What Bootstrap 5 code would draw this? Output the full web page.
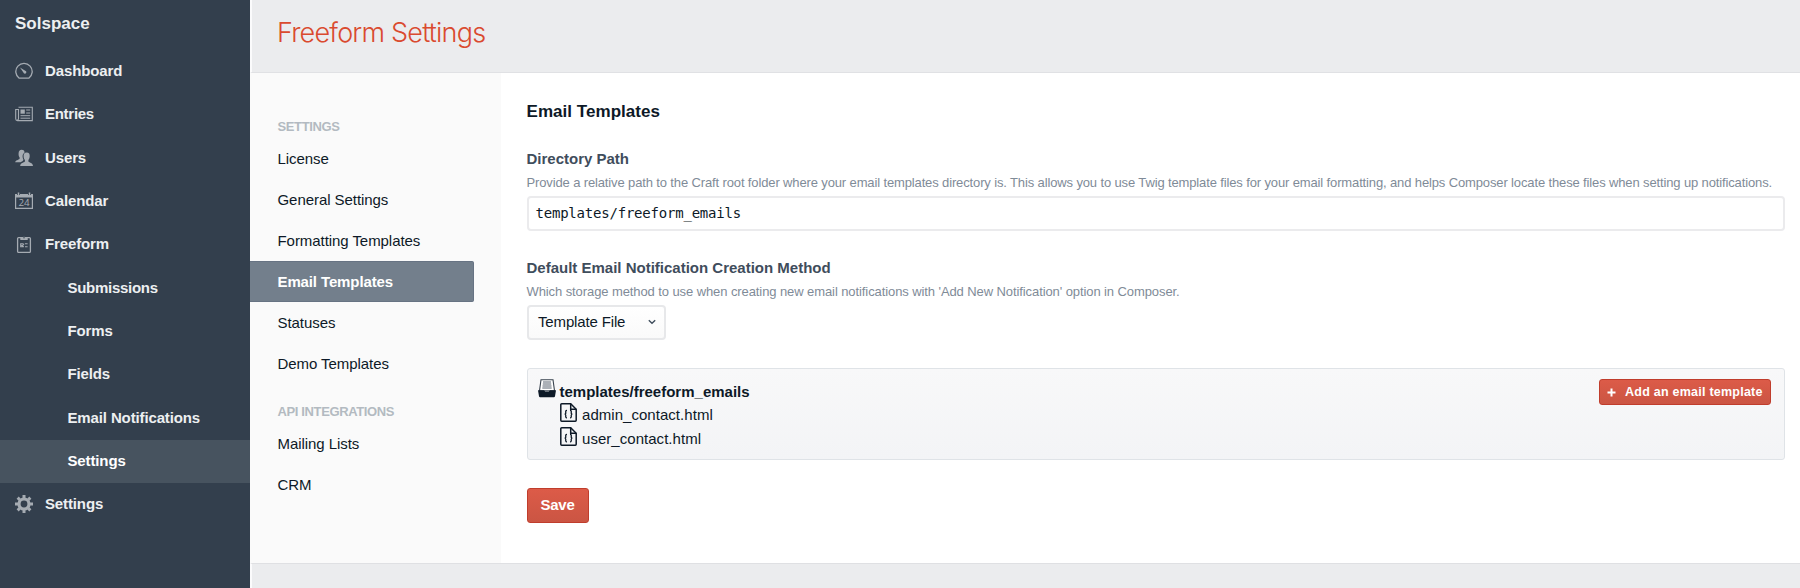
<!DOCTYPE html>
<html lang="en">
<head>
<meta charset="utf-8">
<title>Freeform Settings</title>
<link href="https://cdn.jsdelivr.net/npm/bootstrap@5.3.0/dist/css/bootstrap.min.css" rel="stylesheet">
<style>
body{font:15px/20px "Liberation Sans",Arial,sans-serif;color:#0d1927;background:#ebecee;height:588px;overflow:hidden}
.side{width:250px;background:#333f4d;color:#edeff1;font-weight:700}
.brand{height:50px;padding:14px 0 0 15px;font-size:17px}
.side .nav-link{height:43.33px;padding:0 0 1px 15px;color:#edeff1;letter-spacing:-.13px;display:flex;align-items:center}
.side .nav-link svg{width:18px;height:18px;margin-right:12px;color:#a5abb2;flex:none}
.side .nav-link.sub{padding-left:67.5px}
.side .nav-link.tight{letter-spacing:-.28px}
.side .nav-link.active{background:#47535f;color:#fff}
.page-head{height:73px;border-left:2px solid #fbfbfc;border-bottom:1px solid #e0e1e4;padding:14px 0 0 25px}
.page-head h1{font:300 27px/38px Inter,"Liberation Sans",sans-serif;letter-spacing:-.8px;color:#da4a2f;margin:0}
.panel{height:490px}
.settings{width:251px;background:#fafafa;padding:42px 0 0}
.settings h2{font-size:13px;font-weight:700;line-height:24px;height:23px;letter-spacing:-.37px;color:#b3bac1;margin:0;padding-left:27.5px}
.settings .nav+h2{margin-top:15px}
.settings .nav-link{height:41.1px;padding:0 0 0 27.5px;color:#0d1927;letter-spacing:-.06px;line-height:41px}
.settings .nav-link.active{width:224px;background:#737f8c;border:1px solid #677383;border-left:0;border-radius:0 2px 2px 0;color:#fff;font-weight:700;letter-spacing:-.12px;line-height:40px}
.main-col{background:#fff;padding:28px 15px 0 25.5px}
.main-col h2{font-size:17px;font-weight:700;line-height:22px;margin:0 0 26px;letter-spacing:.04px}
.main-col .form-label{display:block;font-weight:700;color:#3f4d5c;line-height:20px;margin:0 0 5px}
.main-col .form-label.method{padding-top:27px}
.hint{font-size:13px;line-height:18px;color:#7f8b98;letter-spacing:-.132px;margin:0 0 4px;white-space:nowrap}
.hint.short{letter-spacing:-.09px}
.main-col .form-control{height:35px;border:2px solid #ebebed;border-radius:4px;padding:2px 8px 0 7px;font:14px/26px "DejaVu Sans Mono",monospace;letter-spacing:-.21px;color:#0d1927}
.picker{width:139px;height:35px;border:2px solid #e7e8ea;border-radius:4px;background:linear-gradient(#fff,#fafafa);padding:0 8px 2px 9.500px;letter-spacing:-.15px}
.filebox{height:92px;margin-top:28px;border:1px solid #dfe3e7;border-radius:3px;background:linear-gradient(#f8f8f9,#f3f4f6);padding:10px 13px 0 10px}
.filebox .f-row{height:24px;white-space:nowrap}
.filebox .f-dir{padding-top:3px}
.filebox .f-item{padding-left:22.5px}
.filebox .f-item span{margin-left:5px;padding-top:1.500px;letter-spacing:.04px}
.btn-submit{background:linear-gradient(#dc5b48,#cb5543);border:1px solid #c03d2c;color:#fff;font-weight:700;padding:0;border-radius:3px}
.btn-submit.save{width:62px;height:35px;margin-top:28px;font-size:15px;letter-spacing:-.26px}
.btn-submit.add{width:172px;height:26px;font-size:12.5px;line-height:24px;letter-spacing:.24px;padding-left:7px}
.btn-submit.add svg{margin-right:9px}
.page-foot{height:25px;border-left:2px solid #fbfbfc;border-top:1px solid #dfe0e3}
</style>
</head>
<body class="d-flex">
<aside class="side flex-shrink-0">
  <div class="brand">Solspace</div>
  <nav class="nav flex-column">
    <a class="nav-link"><svg viewBox="0 0 18 18" fill="none" stroke="currentColor" stroke-width="1.3"><path d="M4.200 16.200a8.200 8.200 0 1 1 9.600 0z" stroke-linejoin="round"/><path d="M5 5.400l5.200 3.300a1.500 1.500 0 1 1-1.800 1.800z" fill="currentColor" stroke="none"/></svg>Dashboard</a>
    <a class="nav-link tight"><svg viewBox="0 0 18 18" fill="none" stroke="currentColor"><path d="M3.500 2.300h13.800v13.300H2.500a1.800 1.800 0 0 1-1.800-1.800V4.500h2.800v9.200a1.200 1.200 0 0 1-1.200 1.200" stroke-width="1.100"/><path d="M5.500 4.500h4.300v4.200H5.500z" fill="currentColor" stroke="none"/><path d="M11.200 5h4M11.200 8h4M5.500 10.700h9.700M5.500 13.200h9.700" stroke-width="1"/></svg>Entries</a>
    <a class="nav-link"><svg viewBox="0 0 18 18" fill="currentColor"><path d="M6.600.8c2.200 0 3 1.300 2.900 2.900-1.500.8-2.100 2.300-1.900 4.400.1 1.200.5 2 .9 2.600-.2 1.300-1.700 1.600-3 2.500H.2c.3-2.200 3.200-2 4.400-3.500V8.400C3.600 7.300 3.500 5.800 3.600 4.300 3.700 2 4.700.8 6.600.8z"/><path d="M11.700 3.500c2.300 0 3.200 1.500 3 3.800-.1 1.700-.6 3-1.300 3.800v1.500c1.200 1.200 4.400 1.400 4.600 4.400H5.200c.2-3 3.400-3.200 4.700-4.400v-1.500c-.8-.8-1.200-2.200-1.300-3.800-.1-2.300.8-3.800 3.100-3.800z"/></svg>Users</a>
    <a class="nav-link"><svg viewBox="0 0 18 18"><path d="M.6 2.600h16.800v13.800H.6z" fill="none" stroke="currentColor" stroke-width="1.200"/><path d="M.6 2h16.800v3.500H.6z" fill="currentColor"/><path d="M3.500.3v2.700M14.500.3v2.700" stroke="#333f4d" stroke-width="3"/><path d="M3.500.4v2.600M14.500.4v2.600" stroke="currentColor" stroke-width="1.500"/><text x="9" y="14.400" text-anchor="middle" font-size="9.800" font-weight="400" fill="currentColor" letter-spacing="0" font-family="Open Sans">24</text></svg>Calendar</a>
    <a class="nav-link"><svg viewBox="0 0 18 18" fill="none" stroke="currentColor"><rect x="2.600" y="2.600" width="12.800" height="14.800" rx="1" stroke-width="1.300"/><path d="M5.300 5V3h1.900a1.900 1.900 0 0 1 3.600 0h1.900v2z" fill="currentColor" stroke="none"/><circle cx="9" cy="2.800" r=".7" fill="#333f4d" stroke="none"/><path d="M8 8.800H5.700v3h2.600V11M6.500 10l.8 1 1.700-2.300M10 8.800h2.600M10 11.800h2.600" stroke-width="1.100"/></svg>Freeform</a>
    <a class="nav-link sub tight">Submissions</a>
    <a class="nav-link sub">Forms</a>
    <a class="nav-link sub">Fields</a>
    <a class="nav-link sub">Email Notifications</a>
    <a class="nav-link sub active">Settings</a>
    <a class="nav-link"><svg viewBox="0 0 18 18" fill="none" stroke="currentColor"><circle cx="9" cy="9" r="5" stroke-width="3.200"/><path d="M9 0v3M9 15v3M0 9h3M15 9h3M2.640 2.640l2.100 2.100M13.260 13.260l2.100 2.100M2.640 15.360l2.100-2.100M13.260 4.740l2.100-2.100" stroke-width="3"/></svg>Settings</a>
  </nav>
</aside>
<div class="flex-grow-1">
  <header class="page-head"><h1>Freeform Settings</h1></header>
  <div class="panel d-flex">
    <nav class="settings flex-shrink-0">
      <h2>SETTINGS</h2>
      <div class="nav flex-column">
        <a class="nav-link">License</a>
        <a class="nav-link">General Settings</a>
        <a class="nav-link">Formatting Templates</a>
        <a class="nav-link active">Email Templates</a>
        <a class="nav-link">Statuses</a>
        <a class="nav-link">Demo Templates</a>
      </div>
      <h2>API INTEGRATIONS</h2>
      <div class="nav flex-column">
        <a class="nav-link">Mailing Lists</a>
        <a class="nav-link">CRM</a>
      </div>
    </nav>
    <main class="main-col flex-grow-1">
      <h2>Email Templates</h2>
      <label class="form-label">Directory Path</label>
      <p class="hint">Provide a relative path to the Craft root folder where your email templates directory is. This allows you to use Twig template files for your email formatting, and helps Composer locate these files when setting up notifications.</p>
      <div class="form-control" contenteditable="true" role="textbox">templates/freeform_emails</div>
      <label class="form-label method">Default Email Notification Creation Method</label>
      <p class="hint short">Which storage method to use when creating new email notifications with 'Add New Notification' option in Composer.</p>
      <div class="picker d-flex align-items-center justify-content-between">Template File<svg width="8" height="6" viewBox="0 0 8 6" fill="none" stroke="#3f4d5c" stroke-width="1.400"><path d="M.8 1.200L4 4.200l3.200-3"/></svg></div>
      <div class="filebox d-flex justify-content-between">
        <div>
          <div class="f-row d-flex fw-bold"><svg class="me-1" width="18" height="19" viewBox="0 0 18 19" fill="none"><path d="M3 .7h12l1.500 11h-15z" fill="#fff" stroke="#37414d" stroke-width="1.100"/><path d="M5 3h8M4.800 5h8.400M4.500 7h9M4.300 9h9.400" stroke="#596370" stroke-width="1"/><path d="M0 11.200h6l1.200 1.400h3.600l1.200-1.400h6l-1 6a1.200 1.200 0 0 1-1.200 1H2.200a1.200 1.200 0 0 1-1.200-1z" fill="#0d1927"/></svg><span class="f-dir">templates/freeform_emails</span></div>
          <div class="f-row d-flex f-item"><svg width="17" height="19" viewBox="0 0 17 19" fill="none" stroke="#0d1927" stroke-width="1.500"><path d="M1.700.8h9l5.500 5.400v11.100a.9.900 0 0 1-.9.900H1.700a.9.900 0 0 1-.9-.9V1.700a.9.900 0 0 1 .9-.9z"/><path d="M10.700.8v5.400h5.500"/><path d="M7 7.300c-2 0-1 2.500-1.300 3.200-.2.500-1 .6-1 .6s.8.100 1 .6c.3.700-.7 3.200 1.300 3.200M10 7.300c2 0 1 2.500 1.300 3.200.2.500 1 .6 1 .6s-.8.100-1 .6c-.3.700.7 3.200-1.300 3.200" stroke-width="1.300"/></svg><span>admin_contact.html</span></div>
          <div class="f-row d-flex f-item"><svg width="17" height="19" viewBox="0 0 17 19" fill="none" stroke="#0d1927" stroke-width="1.500"><path d="M1.700.8h9l5.500 5.400v11.100a.9.900 0 0 1-.9.900H1.700a.9.900 0 0 1-.9-.9V1.700a.9.900 0 0 1 .9-.9z"/><path d="M10.700.8v5.400h5.500"/><path d="M7 7.300c-2 0-1 2.500-1.300 3.200-.2.500-1 .6-1 .6s.8.100 1 .6c.3.700-.7 3.200 1.300 3.200M10 7.300c2 0 1 2.500 1.300 3.200.2.500 1 .6 1 .6s-.8.100-1 .6c-.3.700.7 3.200-1.300 3.200" stroke-width="1.300"/></svg><span>user_contact.html</span></div>
        </div>
        <button class="btn btn-submit add d-flex align-items-center"><svg width="9" height="9" viewBox="0 0 9 9" stroke="#fff" stroke-width="2"><path d="M4.500.5v8M.5 4.500h8"/></svg><span>Add an email template</span></button>
      </div>
      <button class="btn btn-submit save">Save</button>
    </main>
  </div>
  <footer class="page-foot"></footer>
</div>
<script src="https://cdn.jsdelivr.net/npm/bootstrap@5.3.0/dist/js/bootstrap.bundle.min.js"></script>
</body>
</html>
